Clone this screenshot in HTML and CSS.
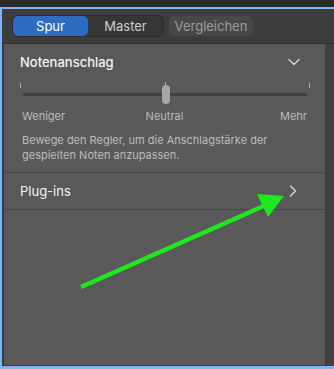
FILE: index.html
```html
<!DOCTYPE html>
<html lang="de">
<head>
  <meta charset="UTF-8">
  <title>Spur Inspector</title>
  <link rel="stylesheet" href="styles.css">
</head>
<body>

  <div class="topbar"></div>
  <div class="frame">
    <div class="toolbar">
      <div class="segmented">
        <button class="seg active">Spur</button>
        <button class="seg">Master</button>
      </div>
      <button class="compare">Vergleichen</button>
    </div>

    <div class="content">
      <div class="panel">
        <div class="section">
          <div class="section-head">
            <span>Notenanschlag</span>
            <svg class="chev" width="12" height="8" viewBox="0 0 12 8"><path d="M1 1.5 L6 6.5 L11 1.5" fill="none" stroke="#d8d8d8" stroke-width="1.4" stroke-linecap="round" stroke-linejoin="round"/></svg>
          </div>
          <div class="slider">
            <div class="tick tick-left"></div>
            <div class="track"></div>
            <div class="thumb-tick"></div>
            <div class="thumb"></div>
            <div class="tick tick-right"></div>
          </div>
          <div class="slider-labels">
            <span>Weniger</span>
            <span class="mid">Neutral</span>
            <span class="end">Mehr</span>
          </div>
          <p class="hint">Bewege den Regler, um die Anschlagstärke der gespielten Noten anzupassen.</p>
        </div>
        <div class="row">
          <span>Plug-ins</span>
          <svg class="chev" width="8" height="12" viewBox="0 0 8 12"><path d="M1.5 1 L6.5 6 L1.5 11" fill="none" stroke="#d8d8d8" stroke-width="1.4" stroke-linecap="round" stroke-linejoin="round"/></svg>
        </div>
      </div>
      <div class="side"></div>
    </div>
  </div>

  <svg class="arrow" width="334" height="369" viewBox="0 0 334 369">
    <line x1="81" y1="287" x2="266" y2="205" stroke="#1ee81e" stroke-width="4.5"/>
    <polygon points="284,196 257,194 268,217" fill="#1ee81e"/>
  </svg>

</body>
</html>
```

FILE: styles.css
```css
body {
  margin: 0;
  width: 334px;
  height: 369px;
  background: #2b2b2b;
  font-family: Inter, "Liberation Sans", sans-serif;
  position: relative;
  overflow: hidden;
}
.topbar {
  height: 7px;
  background: #2b2b2b;
}
.frame {
  height: 357px;
  border-top: 2px solid #80b5f0;
  border-left: 2px solid #80b5f0;
  border-bottom: 3px solid #80b5f0;
  background: #3d3d3d;
  display: flex;
  flex-direction: column;
}
.toolbar {
  height: 34px;
  border-bottom: 1px solid #303030;
  display: flex;
  align-items: center;
  gap: 5px;
  padding-left: 10px;
}
.segmented {
  display: flex;
  background: #363636;
  border: 1px solid #2c2c2c;
  border-radius: 6px;
  padding: 0;
  width: 150px;
  height: 20px;
}
.seg {
  flex: 1;
  border: none;
  background: transparent;
  color: #cfcfcf;
  font-family: inherit;
  font-size: 13px;
  padding: 0;
  border-radius: 5px;
}
.seg.active {
  background: #2d6cc0;
  color: #fff;
}
.compare {
  width: 84px;
  height: 20px;
  border: none;
  border-radius: 5px;
  background: #484848;
  color: #9c9c9c;
  font-family: inherit;
  font-size: 13px;
  padding: 0;
}
.content {
  flex: 1;
  display: flex;
}
.panel {
  flex: 1;
  background: #595959;
  border-left: 2px solid #3b3b3b;
  border-right: 1px solid #3b3b3b;
  border-bottom: 1px solid #3b3b3b;
}
.side {
  width: 8px;
  background: #404040;
}
.section {
  padding: 0 15px 0 16px;
  border-bottom: 1px solid #464646;
}
.section-head {
  height: 36px;
  display: flex;
  align-items: center;
  justify-content: space-between;
  color: #f2f2f2;
  font-size: 13px;
  font-weight: 500;
}
.section-head .chev {
  margin-right: 10px;
}
.slider {
  position: relative;
  height: 26px;
}
.tick {
  position: absolute;
  top: 3px;
  width: 1px;
  height: 5px;
  background: #b0b0b0;
}
.tick-left { left: 0; }
.tick-right { right: 0; }
.track {
  position: absolute;
  left: 3px;
  right: 3px;
  top: 13px;
  height: 3px;
  border-radius: 2px;
  background: #414141;
}
.thumb {
  position: absolute;
  left: 142px;
  top: 5px;
  width: 8px;
  height: 19px;
  border-radius: 4px;
  background: #a8a8a8;
}
.thumb-tick {
  position: absolute;
  left: 145px;
  top: 2px;
  width: 1px;
  height: 3px;
  background: #b0b0b0;
}
.slider-labels {
  display: grid;
  grid-template-columns: 1fr auto 1fr;
  padding: 3px 3px 0 2px;
  color: #bcbcbc;
  font-size: 11px;
  height: 19px;
}
.slider-labels .end {
  text-align: right;
}
.hint {
  margin: 0;
  padding: 5px 10px 9px 2px;
  color: #bdbdbd;
  font-size: 11px;
  line-height: 15px;
}
.row {
  height: 36px;
  padding: 0 16px;
  display: flex;
  align-items: center;
  justify-content: space-between;
  color: #f2f2f2;
  font-size: 13px;
  border-bottom: 1px solid #464646;
}
.row .chev {
  margin-right: 12px;
}
.arrow {
  position: absolute;
  left: 0;
  top: 0;
}
```
